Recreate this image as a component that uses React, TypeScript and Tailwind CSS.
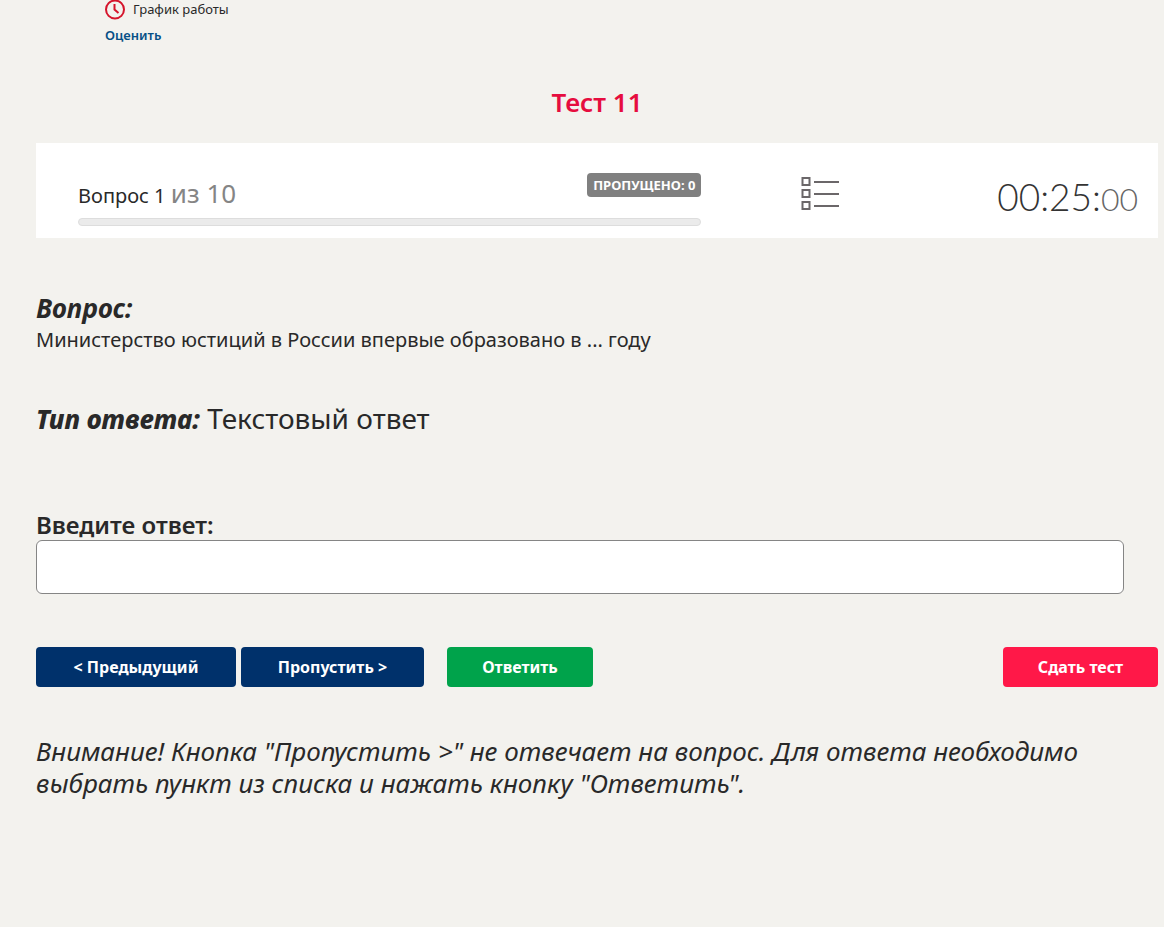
import React, { useState } from 'react';

const TOTAL_QUESTIONS = 10;

const ClockIcon = () => (
  <svg className="w-5 h-5 shrink-0" viewBox="0 0 20 20" fill="none" stroke="#d5142b" strokeWidth="2" aria-hidden="true">
    <circle cx="10" cy="9.5" r="9" />
    <path d="M9.5 4V9.5l4 3.5" />
  </svg>
);

const ListIcon = () => (
  <svg className="w-[38px] h-[34px]" viewBox="0 0 38 34" fill="none" stroke="#6b6769" strokeWidth="2" aria-hidden="true">
    <rect x="1.5" y="1" width="7" height="7" />
    <rect x="1.5" y="13" width="7" height="7" />
    <rect x="1.5" y="25" width="7" height="7" />
    <path d="M13 5h25M13 17h25M13 29h25" />
  </svg>
);

interface TestHeaderProps {
  current: number;
  skipped: number;
}

const TestHeader: React.FC<TestHeaderProps> = ({ current, skipped }) => (
  <section className="flex items-start justify-between bg-white h-[95px] pl-[42px] pr-5">
    <div className="w-[59%] pt-[30px] pr-0.5">
      <div className="flex items-start justify-between h-[45px]">
        <p className="text-xl leading-10">
          Вопрос {current} <span className="text-[26px] text-[#858585]">из {TOTAL_QUESTIONS}</span>
        </p>
        <span className="rounded-sm bg-[#808080] px-1.5 text-[13px] leading-6 font-bold text-white">ПРОПУЩЕНО: {skipped}</span>
      </div>
      <div role="progressbar" aria-label="Прогресс" aria-valuenow={0} className="h-2 rounded border border-[#dddddd] bg-[#ebebeb]" />
    </div>
    <button type="button" aria-label="Список вопросов" className="pt-[34px] cursor-pointer">
      <ListIcon />
    </button>
    <div className="pt-[30px] pl-[60px] font-[Lato,sans-serif] font-light text-[37px] leading-[48px] text-[#333333]">
      00:25:<span className="text-[32px] text-[#666666]">00</span>
    </div>
  </section>
);

export default function App() {
  const [answer, setAnswer] = useState('');

  return (
    <div className="min-h-screen bg-[#f3f2ee] pl-9 pr-1.5 font-['Noto_Sans',sans-serif] text-[#292929]">
      {/* Contacts */}
      <header className="h-[50px] pl-[69px]">
        <div className="flex items-center gap-2 h-5 text-[13px]">
          <ClockIcon />
          <span>График работы</span>
        </div>
        <a href="#rate" className="block pt-1 text-[13px] leading-[22px] font-semibold text-[#075086]">Оценить</a>
      </header>

      <main>
        <h1 className="pt-8 pb-[21px] text-center text-[26px] leading-10 font-semibold text-[#e60d3f]">Тест 11</h1>

        <TestHeader current={1} skipped={0} />

        {/* Question */}
        <section className="pt-[54px]">
          <h2 className="text-[26px] leading-8 font-bold italic">Вопрос:</h2>
          <p className="text-xl leading-8">Министерство юстиций в России впервые образовано в ... году</p>
        </section>

        <p className="pt-[42px] text-[28px] leading-10">
          <span className="text-[26px] font-extrabold italic">Тип ответа:</span> Текстовый ответ
        </p>

        {/* Answer form */}
        <form onSubmit={(e) => e.preventDefault()} className="pt-[71px]">
          <label htmlFor="answer" className="block text-2xl leading-[30px] font-semibold">Введите ответ:</label>
          <div className="pr-[34px]">
            <input
              id="answer"
              type="text"
              value={answer}
              onChange={(e) => setAnswer(e.target.value)}
              className="block w-full h-[54px] rounded-md border border-[#858585] bg-white px-3 text-xl outline-none"
            />
          </div>
          <div className="flex pt-[53px] text-base leading-10 font-bold text-white">
            <button type="button" className="w-[200px] h-10 rounded bg-[#00316b]">&lt; Предыдущий</button>
            <button type="button" className="w-[183px] h-10 ml-[5px] rounded bg-[#00316b]">Пропустить &gt;</button>
            <button type="submit" className="w-[146px] h-10 ml-[23px] rounded bg-[#00a34b]">Ответить</button>
            <button type="button" className="w-[155px] h-10 ml-auto rounded bg-[#ff1848]">Сдать тест</button>
          </div>
        </form>

        <p className="pt-12 pr-10 text-[26px] leading-8 italic">
          Внимание! Кнопка "Пропустить &gt;" не отвечает на вопрос. Для ответа необходимо выбрать пункт из списка и нажать кнопку "Ответить".
        </p>
      </main>
    </div>
  );
}
